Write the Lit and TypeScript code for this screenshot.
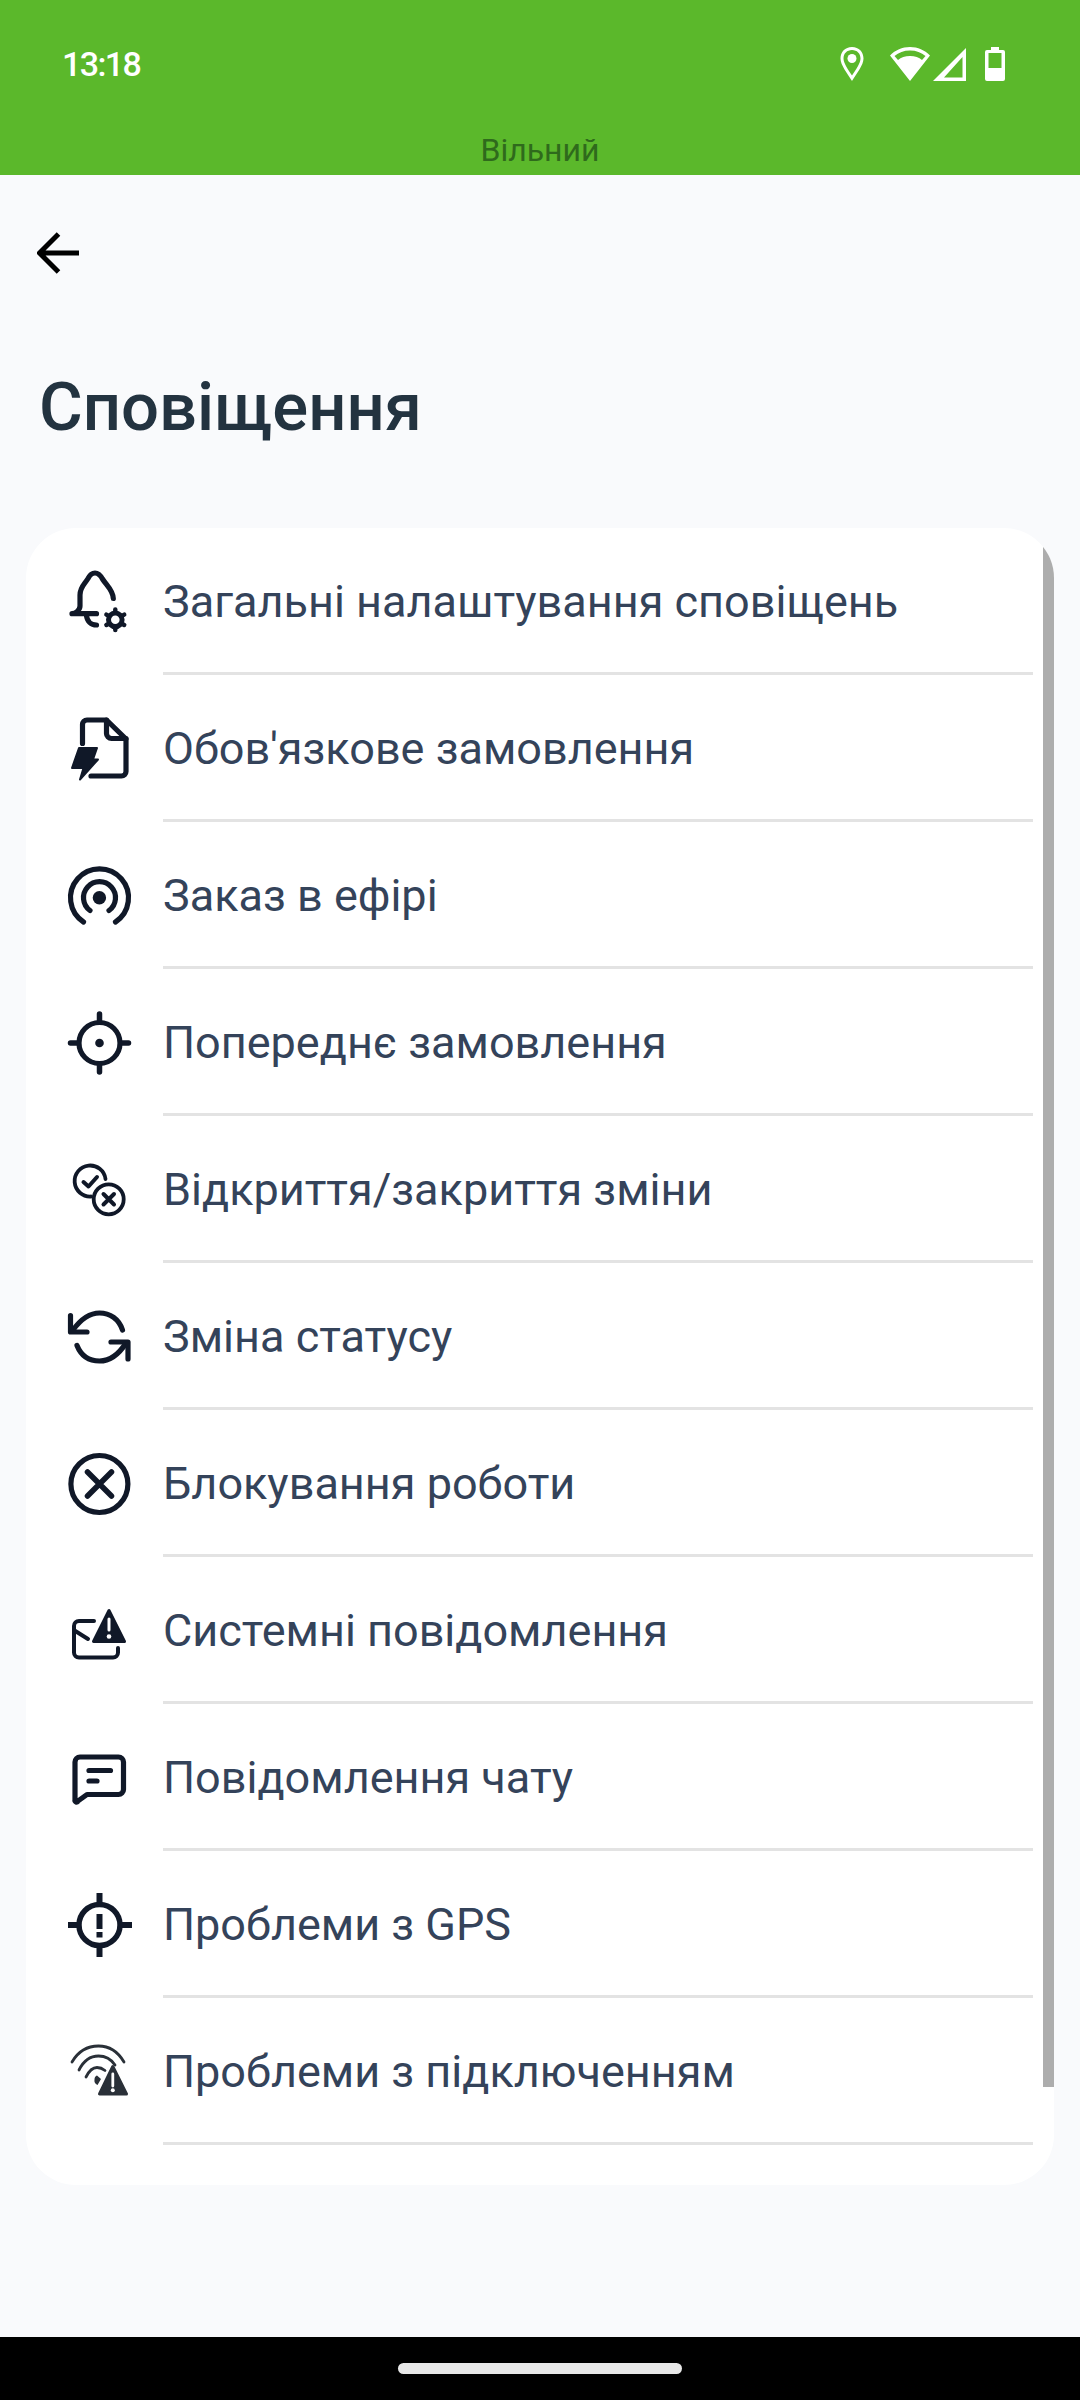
import { LitElement, html, css, svg } from "lit";
import { customElement } from "lit/decorators.js";

// row icons are drawn on a 72x72 box
const icons = {
  bell: svg`
    <path d="M49.300 32.500C49 24 43 20 38.500 13 36 8.500 33.500 7 31 7s-5 1.500-7 5.500C20 19 16 21 16 29v11c0 4-4.500 7.700-8 7.700h24.500" />
    <path d="M22.500 49.500c.5 5.500 4.500 9.500 10 9.500" />
    <circle cx="51.300" cy="53.800" r="6.800" stroke-width="5" />
    <path stroke-width="4.500" d="M51.300 43.500v1M60.200 48.600l-.9.500M60.200 59l-.9-.5M51.300 64.100v-1M42.400 59l.9-.5M42.400 48.600l.9.500" />`,
  doc: svg`
    <path d="M18.500 30.500V11.500a4.500 4.500 0 0 1 4.500-4.500h19.500L62 26v32.500a4.500 4.500 0 0 1-4.500 4.500H27" />
    <path d="M42.500 7v13.500a5 5 0 0 0 5 5H62" />
    <path class="solid" stroke-width="2" d="M15 35h18l-4 11.500h5L16 66.500l3.500-11.500H8z" />`,
  radar: svg`
    <path d="M19.500 62A29 29 0 1 1 51.500 62" />
    <path d="M26 50.500a16 16 0 1 1 19 0" />
    <circle class="solid" stroke="none" cx="35.400" cy="37.700" r="6.700" />`,
  target: svg`
    <circle cx="35.500" cy="36" r="20.500" />
    <path stroke-width="5.500" d="M35.500 7v7M35.500 58v7M6.500 36h7M57.500 36h7" />
    <circle class="solid" stroke="none" cx="35.500" cy="36" r="4.300" />`,
  shift: svg`
    <g stroke-width="3.800">
      <path d="M41.500 25A15.500 15.500 0 1 0 27 42.500" />
      <circle cx="44.700" cy="45.300" r="15" />
    </g>
    <path stroke-width="4" d="M19.500 28l5 4.500 8.500-9.500M39.500 40l10.500 10.500M50 40L39.500 50.500" />`,
  sync: svg`
    <path d="M58.500 29C55 18 46 12 35.500 12 25 12 17 18 9 29" />
    <path d="M13 44.500C17 54.500 25 60 35.500 60 46 60 55 53 62 42" />
    <path d="M6.500 14.500V31h16.500M47 41h17v17" />`,
  cross: svg`
    <circle cx="35.400" cy="36" r="28.500" />
    <path stroke-width="5.500" d="M23.500 24l24 24M47.500 24l-24 24" />`,
  mail: svg`
    <g stroke-width="4">
      <path d="M30 26H15a5 5 0 0 0-5 5v26.500a5 5 0 0 0 5 5h34a5 5 0 0 0 5-5V53" />
      <path d="M10.500 35.500L24 44" />
    </g>
    <path class="solid" stroke-width="3" d="M45 15.500L29.500 46.500h31z" />
    <path class="cut" stroke-width="3" d="M45 24v11" />
    <circle class="hole" stroke="none" cx="45" cy="41.500" r="2.300" />`,
  chat: svg`
    <path d="M16 15h38.500a5 5 0 0 1 5 5v27.500a5 5 0 0 1-5 5H23l-9 6.500a1 1 0 0 1-3-1V20a5 5 0 0 1 5-5z" />
    <path d="M25 28.500h21.500M25 39h8" />`,
  gps: svg`
    <circle cx="35.500" cy="36" r="20.500" stroke-width="5.500" />
    <path stroke-linecap="butt" stroke-width="6" d="M35.500 4v11M35.500 57v11M4 36h11M56 36h12" />
    <path stroke-linecap="butt" stroke-width="6" d="M35.500 25v15" />
    <rect class="solid" stroke="none" x="32.500" y="43" width="6" height="5.500" />`,
  wifi: svg`
    <g class="grey" stroke-width="2.800">
      <path d="M8 26C15 14 24 10 34.500 10S53 14 60 26" />
      <path d="M15 34C20 24 27 20 34.500 20 41 20 47 23 51 29" />
      <path d="M22 41c3-6 7-9.500 11-9.500 3 0 5.500 1 8 3" />
    </g>
    <path class="grey-solid" stroke="none" d="M33 39.500l4 3.500-3.500 6c-2.500-1-3.500-3-3-5.500 0-2 1-3.500 2.500-4z" />
    <path class="grey-solid" stroke="#2a3038" stroke-width="3" d="M48.800 30.500L35.500 58h27z" />
    <path class="cut" stroke-width="2.800" d="M48.800 38v12" />
    <circle class="hole" stroke="none" cx="48.800" cy="54.300" r="2" />`,
};

const rows = [
  { label: "Загальні налаштування сповіщень", icon: icons.bell },
  { label: "Обов'язкове замовлення", icon: icons.doc },
  { label: "Заказ в ефірі", icon: icons.radar },
  { label: "Попереднє замовлення", icon: icons.target },
  { label: "Відкриття/закриття зміни", icon: icons.shift },
  { label: "Зміна статусу", icon: icons.sync },
  { label: "Блокування роботи", icon: icons.cross },
  { label: "Системні повідомлення", icon: icons.mail },
  { label: "Повідомлення чату", icon: icons.chat },
  { label: "Проблеми з GPS", icon: icons.gps },
  { label: "Проблеми з підключенням", icon: icons.wifi },
];

@customElement("app-root")
export class AppRoot extends LitElement {
  static styles = css`
    :host {
      display: flex;
      flex-direction: column;
      width: 1080px;
      height: 2400px;
      background: #f9fafc;
      font-family: Roboto, "Noto Sans", sans-serif;
    }

    .top {
      display: flex;
      flex-direction: column;
      height: 175px;
      background: #5bb82b;
    }

    .status {
      display: flex;
      align-items: center;
      justify-content: space-between;
      height: 128px;
      padding: 0 75px 0 62px;
    }

    .time {
      color: #fff;
      font-size: 34px;
      font-weight: 500;
      letter-spacing: -1.6px;
    }

    .status-icons {
      display: flex;
      align-items: center;
      height: 40px;
    }

    .status-icons svg {
      display: block;
      fill: #fff;
    }

    .pin {
      margin-right: 26px;
    }

    .signal {
      margin: 0 19px 0 3px;
    }

    .state {
      padding-top: 3px;
      text-align: center;
      font-size: 32px;
      line-height: 38px;
      color: #2f6a1c;
    }

    .toolbar {
      display: flex;
      align-items: center;
      height: 156px;
      padding-left: 37px;
    }

    .back {
      display: block;
      fill: none;
      stroke: #000;
      stroke-width: 5px;
    }

    h1 {
      margin: 0;
      padding: 31px 0 0 39px;
      height: 197px;
      box-sizing: border-box;
      font-size: 67px;
      line-height: 90px;
      font-weight: 500;
      color: #233340;
    }

    .card {
      position: relative;
      margin: 0 26px;
      height: 1657px;
      box-sizing: border-box;
      background: #fff;
      border-radius: 50px;
      overflow: hidden;
    }

    .scroll {
      position: absolute;
      top: 0;
      right: 0;
      width: 11px;
      height: 1559px;
      background: #adadad;
    }

    .row {
      display: flex;
      align-items: center;
      height: 147px;
    }

    .row svg {
      flex: none;
      display: block;
      width: 72px;
      height: 72px;
      margin: 0 27px 0 38px;
      fill: none;
      stroke: #101828;
      stroke-width: 5.200px;
      stroke-linecap: round;
      stroke-linejoin: round;
    }

    .row svg .solid {
      fill: #101828;
    }

    .row svg .hole {
      fill: #fff;
    }

    .row svg .cut {
      stroke: #fff;
    }

    .row svg .grey {
      stroke: #2a3038;
    }

    .row svg .grey-solid {
      fill: #2a3038;
    }

    .label {
      flex: 1;
      height: 147px;
      box-sizing: border-box;
      margin-right: 21px;
      padding-top: 3px;
      border-bottom: 3px solid #e3e3e3;
      font-size: 45px;
      line-height: 142px;
      color: #34435a;
      white-space: nowrap;
    }

    .nav {
      display: flex;
      align-items: flex-start;
      justify-content: center;
      margin-top: auto;
      height: 63px;
      padding-top: 26px;
      box-sizing: border-box;
      background: #000;
    }

    .pill {
      width: 284px;
      height: 11px;
      border-radius: 6px;
      background: #e8e8e8;
    }
  `;

  render() {
    return html`
      <div class="top">
        <div class="status">
          <span class="time">13:18</span>
          <div class="status-icons">
            <svg class="pin" width="24" height="34" viewBox="0 0 24 34">
              <path fill-rule="evenodd" d="M12 0C5 0 .5 5 .5 11.500.5 18 7 26 12 34c5-8 11.500-16 11.500-22.500C23.500 5 19 0 12 0zm0 3c5 0 8.500 3.500 8.500 8.500 0 4.500-4.500 11-8.500 17-4-6-8.500-12.500-8.500-17C3.500 6.500 7 3 12 3z" />
              <circle cx="12" cy="11.500" r="4.500" />
            </svg>
            <svg width="40" height="34" viewBox="0 0 40 34">
              <path fill-rule="evenodd" d="M20 0C12 0 5.500 3 0 8.500L20 34 40 8.500C34.500 3 28 0 20 0zm0 3.500c6 0 11.500 2 15.500 5.500l-3.500 4c-3-2.500-7-4-12-4s-9 1.500-12 4L4.500 9C8.500 5.500 14 3.500 20 3.500z" />
            </svg>
            <svg class="signal" width="33" height="34" viewBox="0 0 33 34">
              <path fill-rule="evenodd" d="M33 1v33H0zM29.500 10L11 30.500h18.500z" />
            </svg>
            <svg width="20" height="34" viewBox="0 0 20 34">
              <path fill-rule="evenodd" d="M6 0h8v3h4a2 2 0 0 1 2 2v27a2 2 0 0 1-2 2H2a2 2 0 0 1-2-2V5a2 2 0 0 1 2-2h4zM3.500 6v15h13V6z" />
            </svg>
          </div>
        </div>
        <div class="state">Вільний</div>
      </div>
      <div class="toolbar">
        <svg class="back" width="42" height="42" viewBox="0 0 42 42">
          <path d="M42 21H4M21.500 2L2.500 21l19 19" />
        </svg>
      </div>
      <h1>Сповіщення</h1>
      <div class="card">
        <div class="scroll"></div>
        ${rows.map(
          (r) => html`
            <div class="row">
              <svg viewBox="0 0 72 72">${r.icon}</svg>
              <div class="label">${r.label}</div>
            </div>
          `
        )}
      </div>
      <div class="nav"><div class="pill"></div></div>
    `;
  }
}
